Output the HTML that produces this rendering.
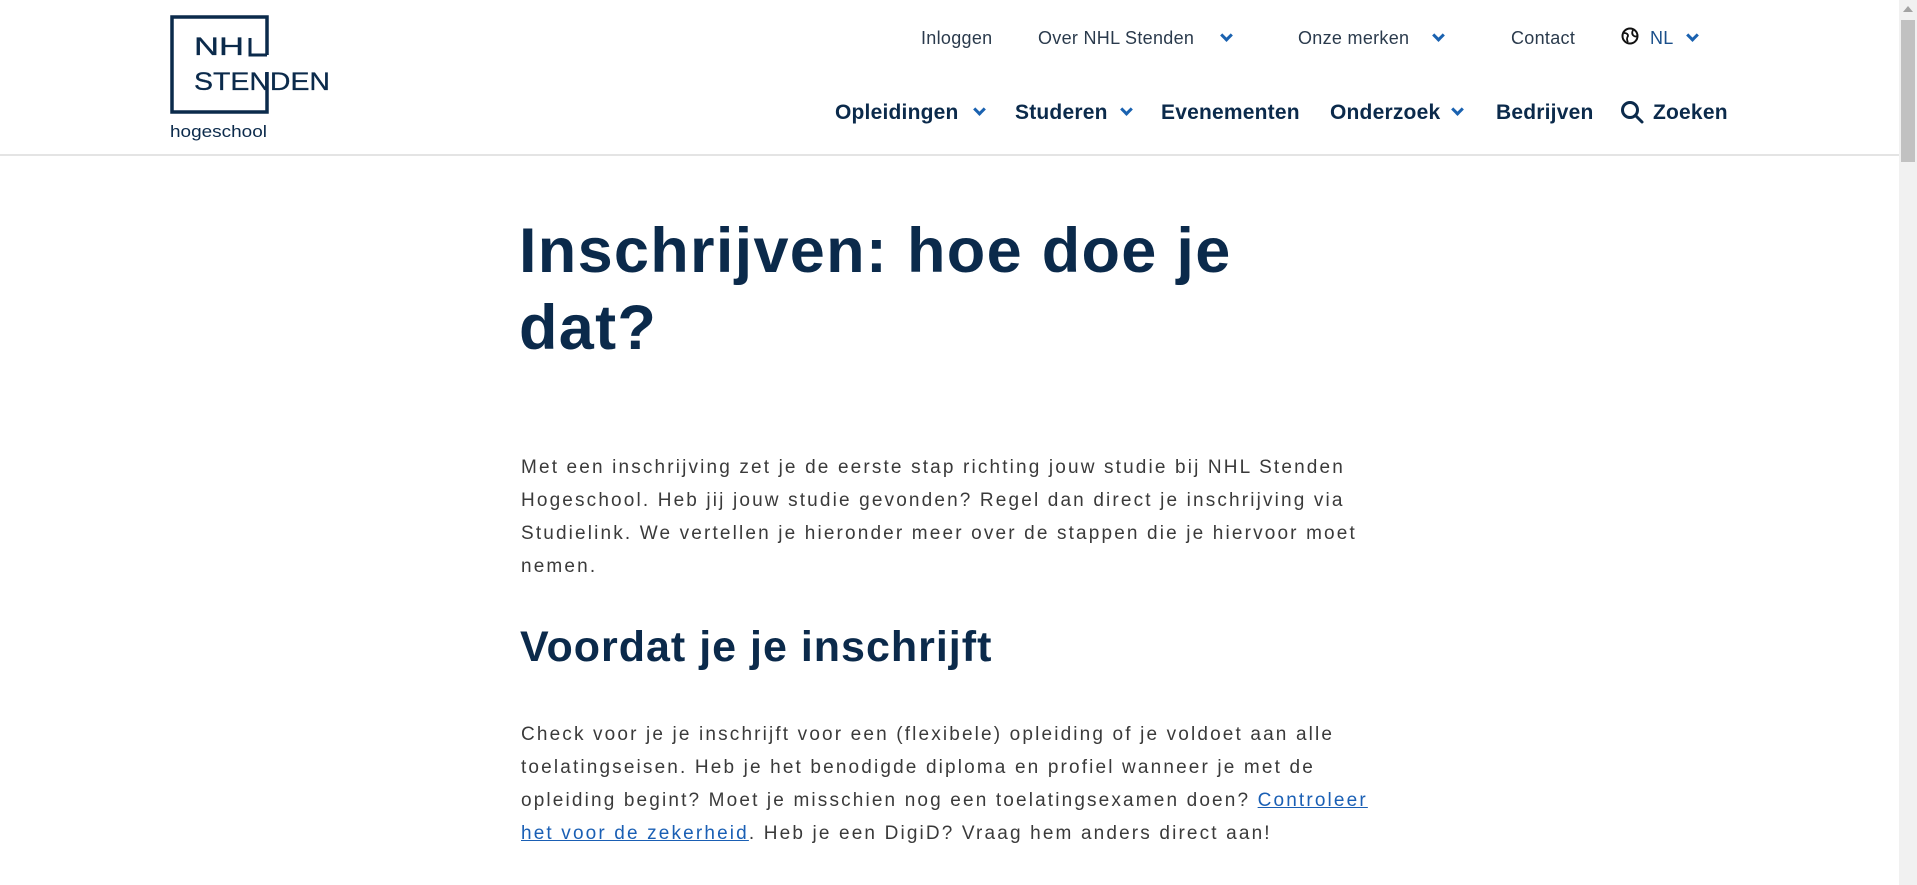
<!DOCTYPE html>
<html><head><meta charset="utf-8"><style>
*{margin:0;padding:0;box-sizing:border-box}
body{width:1917px;height:885px;overflow:hidden;background:#fff;font-family:"Liberation Sans",sans-serif;position:relative}
.a{position:absolute;white-space:nowrap}
.top{font-size:18px;color:#2a3a4c;top:28px;letter-spacing:0.3px}
.main{font-size:21px;font-weight:bold;color:#0b2a4b;top:101px;letter-spacing:0.2px}
.chev{position:absolute;width:9px;height:9px;border-right:3px solid #1a62b0;border-bottom:3px solid #1a62b0;transform:rotate(45deg)}
h1{position:absolute;left:519px;top:213px;font-size:63px;line-height:77px;color:#0b2a4b;font-weight:bold;letter-spacing:1.3px}
.p{position:absolute;left:521px;font-size:19px;line-height:33px;color:#3a3a3a;letter-spacing:2.15px;white-space:nowrap}
h2{position:absolute;left:520px;top:623px;font-size:43px;color:#0b2a4b;font-weight:bold;white-space:nowrap;letter-spacing:1px}
a{color:#1a5fb4;text-decoration:underline}
</style></head><body>
<!-- logo -->
<svg class="a" style="left:170px;top:15px" width="180" height="130" viewBox="0 0 180 130">
<path d="M97 40 V2 H2 V97 H97 V57" fill="none" stroke="#0b2a4b" stroke-width="3.5"/>
<path d="M80 23 V40 H97" fill="none" stroke="#0b2a4b" stroke-width="3"/>
<text x="24" y="40" font-family="Liberation Sans" font-size="25" fill="#0b2a4b" stroke="#0b2a4b" stroke-width="0.3" textLength="50" lengthAdjust="spacingAndGlyphs">NH</text>
<text x="24" y="75" font-family="Liberation Sans" font-size="25" fill="#0b2a4b" stroke="#0b2a4b" stroke-width="0.3" textLength="136" lengthAdjust="spacingAndGlyphs">STENDEN</text>
<text x="0" y="122" font-family="Liberation Sans" font-size="17" fill="#0b2a4b" textLength="97" lengthAdjust="spacingAndGlyphs">hogeschool</text>
</svg>
<div class="a top" style="left:921px">Inloggen</div>
<div class="a top" style="left:1038px">Over NHL Stenden</div><div class="chev" style="left:1222px;top:31px"></div>
<div class="a top" style="left:1298px">Onze merken</div><div class="chev" style="left:1434px;top:31px"></div>
<div class="a top" style="left:1511px">Contact</div>
<svg class="a" style="left:1621px;top:27px" width="18" height="18" viewBox="0 0 18 18"><circle cx="9" cy="9" r="7.5" fill="none" stroke="#111" stroke-width="2"/><path d="M3 6 Q7 6 7 9 Q5 12 7 15 M12 3 Q10 7 13 9 Q15 10 16 9" fill="none" stroke="#111" stroke-width="1.8"/></svg>
<div class="a top" style="left:1650px;color:#1a4f8a">NL</div><div class="chev" style="left:1688px;top:31px"></div>

<div class="a main" style="left:835px">Opleidingen</div><div class="chev" style="left:975px;top:105px"></div>
<div class="a main" style="left:1015px">Studeren</div><div class="chev" style="left:1122px;top:105px"></div>
<div class="a main" style="left:1161px">Evenementen</div>
<div class="a main" style="left:1330px">Onderzoek</div><div class="chev" style="left:1453px;top:105px"></div>
<div class="a main" style="left:1496px">Bedrijven</div>
<svg class="a" style="left:1620px;top:100px" width="26" height="26" viewBox="0 0 26 26"><circle cx="10" cy="10" r="7.5" fill="none" stroke="#0b2a4b" stroke-width="3"/><path d="M15.5 15.5 L22 22" stroke="#0b2a4b" stroke-width="3" stroke-linecap="round"/></svg>
<div class="a main" style="left:1653px">Zoeken</div>
<div class="a" style="left:0;top:154px;width:1899px;height:2px;background:#e4e4e4"></div>
<!-- scrollbar -->
<div class="a" style="left:1899px;top:0;width:18px;height:885px;background:#f1f1f1"></div>
<div class="a" style="left:1901px;top:20px;width:14px;height:142px;background:#c1c1c1"></div>
<div class="a" style="left:1903px;top:6px;width:0;height:0;border-left:5px solid transparent;border-right:5px solid transparent;border-bottom:6px solid #a3a3a3"></div>

<h1>Inschrijven: hoe doe je<br>dat?</h1>
<div class="p" style="top:451px">Met een inschrijving zet je de eerste stap richting jouw studie bij NHL Stenden<br>Hogeschool. Heb jij jouw studie gevonden? Regel dan direct je inschrijving via<br>Studielink. We vertellen je hieronder meer over de stappen die je hiervoor moet<br>nemen.</div>
<h2>Voordat je je inschrijft</h2>
<div class="p" style="top:718px">Check voor je je inschrijft voor een (flexibele) opleiding of je voldoet aan alle<br>toelatingseisen. Heb je het benodigde diploma en profiel wanneer je met de<br>opleiding begint? Moet je misschien nog een toelatingsexamen doen? <a>Controleer</a><br><a>het voor de zekerheid</a>. Heb je een DigiD? Vraag hem anders direct aan!</div>
</body></html>
